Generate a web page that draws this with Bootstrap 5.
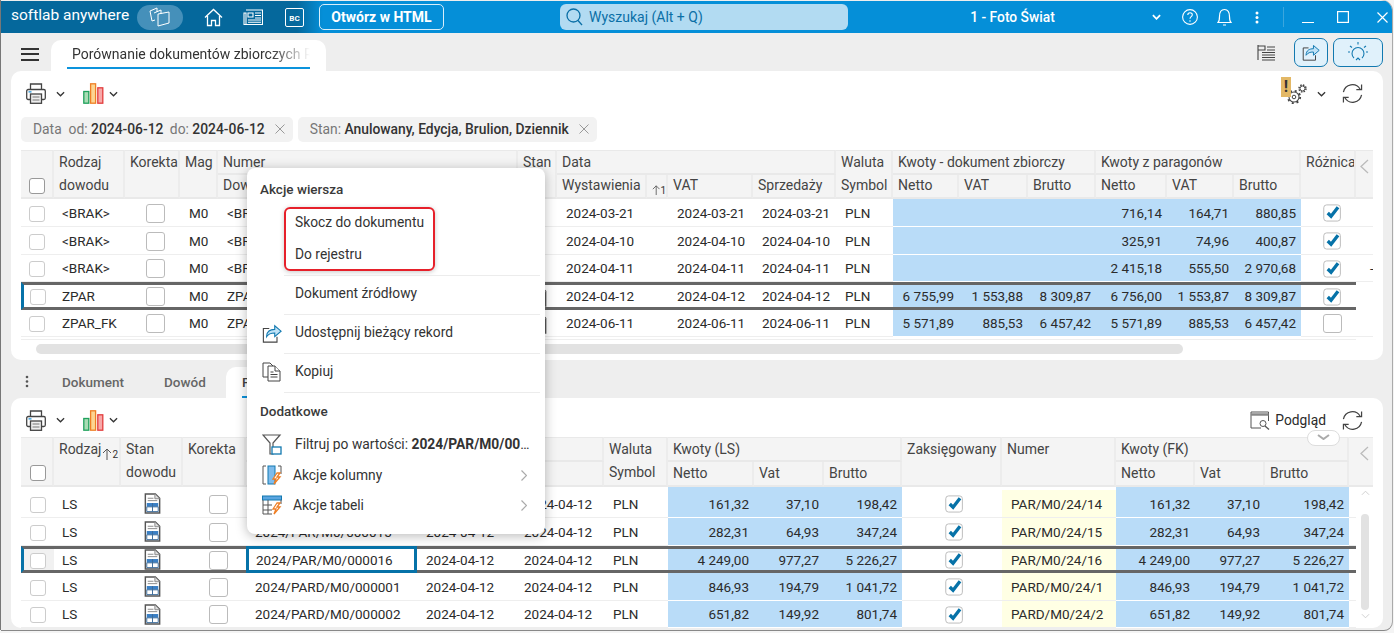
<!DOCTYPE html>
<html lang="pl">
<head>
<meta charset="utf-8">
<title>softlab anywhere</title>
<link href="https://cdn.jsdelivr.net/npm/bootstrap@5.3.0/dist/css/bootstrap.min.css" rel="stylesheet">
<style>
html,body{height:633px;overflow:hidden;background:#f4f4f4}
body{font-family:Roboto,"Liberation Sans",sans-serif;font-size:13.5px;color:#2b2b2b}
.app-win{position:relative;margin:0 2px 0 1px;height:630px;background:#eee;border-top-right-radius:11px;border-bottom-right-radius:8px;box-shadow:-1px 0 0 #777,0 1px 0 #888,1px 0 0 #aaa;overflow:hidden}
.tbar{height:32px;padding-left:10px;background:linear-gradient(90deg,#05689c 0,#05689c 296px,#058fd8 322px);color:#fff;margin-top:1px;flex:none}
.brand-txt{font-size:15.5px;width:126px;line-height:1;margin-top:-2px}
.pill-ico{width:46px;height:25px;border-radius:13px;background:#4590ba}
.tb-ico{color:#fff;line-height:0}
.bc-box{width:19px;height:19px;border:1.5px solid #fff;border-radius:2px;font-size:8px;font-weight:700;line-height:1;padding-top:6px;text-align:center}
.html-btn{--bs-btn-color:#fff;--bs-btn-border-color:#d8eefa;--bs-btn-hover-color:#fff;width:125px;height:26px;padding:0;border-radius:5px;font-size:14px;font-weight:700;line-height:24px}
.search-box{width:288px;height:26px;background:#b2dbf2;border-radius:6px;color:#0a6fa6;font-size:14px;padding-left:6px;gap:6px}
.firm-nm{width:297px;text-align:center;font-size:13.8px;font-weight:500}
.tabs-a{height:38px;flex:none}
.hamb{width:18px;height:13px;border-top:2px solid #333;border-bottom:2px solid #333;position:relative;margin:0 12px 0 20px}
.hamb::after{content:"";position:absolute;left:0;right:0;top:3.5px;height:2px;background:#333}
.tab-on{width:275px;height:31px;background:#fff;border-radius:10px 10px 0 0;padding:0 16px}
.tab-lbl{font-size:14px;height:29px;line-height:29px;border-bottom:2px solid #0c93dc;color:#333;white-space:nowrap;overflow:hidden}
.tab-fade{display:block;padding-left:5px;-webkit-mask-image:linear-gradient(90deg,#000 84%,transparent 100%);mask-image:linear-gradient(90deg,#000 84%,transparent 100%)}
.act-btn{height:29px;border:1px solid #1279b0;border-radius:7px;background:#e0f1fb;padding:0;line-height:0}
.panel-box{background:#fff;border-radius:10px;margin:0 9px 0 10px;padding:5px 10px 0;overflow:hidden;flex:none}
.panel-a{height:289px}
.panel-b{height:230px}
.tool-row{height:35px}
.panel-b .tool-row{height:34px}
.filter-chip{height:25px;background:#f2f2f2;border-radius:5px;padding:0 8px 0 12px;color:#777;white-space:nowrap;line-height:25px;margin-right:5px;font-size:13.85px}
.filter-chip b{font-weight:500;color:#333}
.chip-gap{margin-left:3px}
.chip-x{margin-left:10px;line-height:1;display:inline-flex}
.grid-tbl{--bs-table-bg:transparent;table-layout:fixed;width:1352px;margin:0;border-collapse:separate;border-spacing:0;color:#2b2b2b}
.grid-tbl th,.grid-tbl td{padding:0;white-space:nowrap;overflow:hidden;vertical-align:middle;line-height:20px;font-size:13.5px}
.grid-tbl th{font-size:14px;font-weight:400;color:#444;background:#f4f4f4;border-bottom:2px solid #e9e9e9;border-right:2px solid #ececec;padding-left:5px;height:25px;vertical-align:top;line-height:22px}
.grid-tbl thead tr:first-child th{border-top:1px solid #e9e9e9}
.grid-tbl thead tr+tr th{height:24px;line-height:21px}
.panel-b .grid-tbl thead tr+tr th{height:25px;line-height:22px}
.grid-tbl th.two-ln{line-height:23px}
.grid-tbl th.nobr{border-right:0}
.grid-tbl td{border-bottom:1px solid #eee;background:#fff}
.grid-tbl td.pl-m{padding-left:9px}
.grid-tbl td.pl-b{padding-left:21px}
.grid-tbl td.pl-k{padding-left:26px}
.grid-tbl td.pl-c{padding-left:8px}
.grid-tbl td.pl-r{padding-left:22px;line-height:0}
.grid-tbl td.pl-z{padding-left:43px;line-height:0}
.grid-tbl td.pl-d{padding-left:14px}
.grid-tbl td.amt{background:#b9dcf8;border-bottom:1px solid #fff;text-align:right;padding-right:5px}
.grid-tbl td.yel{background:#ffffe4;padding-left:9px}
.grid-tbl td.ctr{text-align:center;line-height:0}
.grid-tbl td.nob{border-bottom:0}
.r28 td{height:28px}
.r27 td{height:27px}
.sliv td{height:3px;border-bottom:0;line-height:0;font-size:0}
.sliv td.amt{background:#b9dcf8;border-bottom:0}
.grid-tbl .pick td{border-top:3px solid #666;border-bottom:3px solid #666}
.grid-tbl .pick td.edge{border-left:3px solid #0672a8;background:#f1f1f1}
.grid-tbl .pick td.edge-t{border-left:3px solid #0672a8}
.grid-tbl .pick td.cur{border:3px solid #0672a8;padding-left:7px}
.grid-tbl .pick td.last-c{border:0;background:#fff}
.form-check-input.box-s,.form-check-input.box-l{margin:0;border:1px solid #ccc;border-radius:3px;vertical-align:middle;float:none}
.form-check-input.box-s{width:16px;height:16px}
.form-check-input.box-l{width:19px;height:19px;border-color:#bbb}
.form-check-input.box-h{border-color:#999}
.sort-mk{font-size:10px;color:#333;line-height:1;display:flex;align-items:flex-end;padding-top:6px;height:21px}
.grid-tbl th.sort-cell{padding-left:5px}
.hs-wrap{margin-top:2px;padding-top:4px;border-top:1px solid #eee;width:1335px;height:15px}
.hs-thumb{width:1147px;height:10px;background:#e2e2e2;border-radius:5px;margin-left:15px}
.vs-col{height:137px;padding:2px 0 0 5px;background:#fff}
.vs-thumb{width:8px;height:96px;border-radius:4px;background:#e2e2e2;margin:18px 0 0}
.pull-pill{position:absolute;left:1306px;top:430px;width:33px;height:16px;background:#fff;border:1px solid #ddd;border-radius:9px;text-align:center;line-height:0;padding-top:3px}
.tabs-b{height:38px;padding-top:7px;color:#666;font-weight:500;flex:none}
.tab-plain{height:31px;line-height:30px}
.tab-on-b{width:190px;height:31px;background:#fff;border-radius:10px 10px 0 0;padding-left:16px;position:relative;line-height:30px;color:#444}
.tab-on-b::after{content:"";position:absolute;left:16px;right:16px;bottom:0;height:2px;background:#0c93dc}
.warn-mk{position:absolute;left:-6px;top:-7px;width:10px;height:20px;background:#e3b866;color:#333;font-weight:700;font-size:16px;line-height:19px;text-align:center}
.ctx-menu{position:absolute;left:246px;top:168px;width:298px;height:366px;display:block;padding:0;margin:0;background:#fff;border:0;border-radius:8px;box-shadow:0 2px 12px rgba(0,0,0,.28);font-size:13.8px;--bs-dropdown-link-color:#333;z-index:5}
.ctx-head{padding:11px 0 0 13px;line-height:20px;height:39px;font-weight:500;color:#3a3a3a;font-size:13.5px}
.ctx-head-b{padding-top:8px;height:35px}
.ctx-red{margin:0 0 4px 37px;width:151px;height:64px;border:2px solid #e6202a;border-radius:6px;box-shadow:0 1px 5px rgba(0,0,0,.22)}
.ctx-menu .ctx-red .dropdown-item{padding:0 0 0 9px}
.ctx-menu .ctx-red .ctx-up{height:27px;line-height:27px}
.ctx-menu .ctx-red .ctx-dn{height:29px;line-height:29px;margin-top:4px}
.ctx-line{margin:0 5px 0 37px;height:1px;background:#ececec;border:0;opacity:1}
.ctx-menu .dropdown-item{color:#333;background:none;font-size:13.8px}
.ctx-it{height:38px;padding:0 0 3px 48px!important;display:flex;align-items:center;position:relative}
.ctx-ic{width:20px;margin:0 13px 0 15px;line-height:0;flex:none}
.ctx-ico{height:38px;padding:0 0 3px 0!important;display:flex;align-items:center}
.ctx-sm{height:30px;padding:0!important;display:flex;align-items:center}
.ctx-sm .ctx-ic{margin-right:11px}
.ctx-menu .ctx-flt{height:32px}
.ctx-flt .ctx-ic{margin-right:13px}
.ctx-trunc{width:240px;white-space:nowrap;overflow:hidden;text-overflow:ellipsis;display:block}
.ctx-trunc b{font-weight:700}
.ctx-arr{position:absolute;left:274px;line-height:0}
</style>
</head>
<body>
<svg width="0" height="0" class="position-absolute">
<defs>
<symbol id="i-print" viewBox="0 0 20 21"><path d="M4.5 6.5V1h11v5.500" fill="#fff" stroke="#444" stroke-width="1.300"/><rect x=".7" y="6.500" width="18.600" height="10" rx="1.500" fill="#fff" stroke="#444" stroke-width="1.300"/><rect x="4.500" y="11" width="11" height="9.300" fill="#eee" stroke="#444" stroke-width="1.300"/><path d="M2.500 8.800h3" stroke="#1a8fd6" stroke-width="1.300"/><path d="M6.500 14h7M6.500 17h7" stroke="#777"/></symbol>
<symbol id="i-chart" viewBox="0 0 21 21"><rect x=".8" y="8.500" width="5" height="11.700" fill="#a9dcb4" stroke="#1fa15c" stroke-width="1.300"/><rect x="7.600" y=".8" width="5" height="19.400" fill="#fcd592" stroke="#ef7f25" stroke-width="1.300"/><rect x="14.800" y="4.800" width="5" height="15.400" fill="#f7a8a8" stroke="#e23d3d" stroke-width="1.300"/></symbol>
<symbol id="i-chev" viewBox="0 0 10 6"><path d="M1 1l4 4 4-4" fill="none" stroke="#333" stroke-width="1.400"/></symbol>
<symbol id="i-sync" viewBox="0 0 22 22"><path d="M1.500 9.500A9.500 9.500 0 0 1 19 6.500M20.500 1.500V7h-5.500M20.500 12.500A9.500 9.500 0 0 1 3 15.500M1.500 20.500V15H7" fill="none" stroke="#444" stroke-width="1.300"/></symbol>
<symbol id="i-doc" viewBox="0 0 17 22"><path d="M1 1h10.500L16 5.500V21H1z" fill="#fff" stroke="#555" stroke-width="1.500"/><path d="M11 1v5h5" fill="#ddd" stroke="#888"/><path d="M3.500 5.500h6M3.500 8h10" stroke="#888"/><rect x="2.500" y="10.500" width="12" height="4" fill="#3a7fc4"/><path d="M2.500 14.500h12v5h-12zM8.500 10.500v9" fill="#fff" stroke="#3a6a9a"/></symbol>
<symbol id="i-tick" viewBox="0 0 20 20"><rect x=".8" y="2" width="17.500" height="17" rx="3" fill="#fff" stroke="#bbb"/><path d="M5 10.500l3.500 3.500L15.800 4.500" fill="none" stroke="#0672a8" stroke-width="3.500"/></symbol>
<symbol id="i-share" viewBox="0 0 22 22"><path d="M8 6H1.500v15h15v-6" fill="none" stroke="#444" stroke-width="1.200"/><path d="M5 15c0-6 4-8 9-8V3l7 6-7 6v-4c-4 0-7 1-9 4z" fill="#bfe2f6" stroke="#1279b0" stroke-width="1.200"/></symbol>
</defs>
</svg>
<div class="app-win d-flex flex-column">
  <header class="tbar d-flex align-items-center">
    <div class="brand-txt">softlab anywhere</div>
    <div class="pill-ico d-flex align-items-center justify-content-center ms-0">
      <svg width="22" height="20" viewBox="0 0 22 20" fill="none" stroke="#fff" stroke-width="1"><path d="M1 4l7-3v4M1 4l2 10 3-1M5 6l7-3v4"/><path d="M9 7l11-2v11L9 19z"/></svg>
    </div>
    <div class="tb-ico" style="margin-left:21px"><svg width="19" height="19" viewBox="0 0 19 19" fill="none" stroke="#fff" stroke-width="1.300"><path d="M1 9.500L9.500 1.500 18 9.500M3.500 8v9.500h4v-5h4v5h4V8"/></svg></div>
    <div class="tb-ico" style="margin-left:20px"><svg width="20" height="16" viewBox="0 0 20 16" fill="none" stroke="#fff" stroke-width="1.100"><path d="M3 1h16.500v14.500H1V4h2v11.500M5 4h5v4H5zM12 4h6M12 6.500h6M12 9h6M5 11h13M5 13.300h13"/></svg></div>
    <div class="tb-ico bc-box" style="margin-left:22px">BC</div>
    <button type="button" class="btn html-btn" style="margin-left:15px">Otwórz w HTML</button>
    <div class="search-box d-flex align-items-center" style="margin-left:116px">
      <svg width="17" height="18" viewBox="0 0 17 18" fill="none" stroke="#0a6fa6" stroke-width="1.300"><circle cx="7.500" cy="7.500" r="6.500"/><path d="M12 12.500l4 4.500"/></svg>
      <span>Wyszukaj (Alt + Q)</span>
    </div>
    <div class="firm-nm" style="margin-left:16px">1 - Foto Świat</div>
    <svg width="9" height="6" viewBox="0 0 10 6" style="margin-left:-9px"><path d="M1 1l4 4 4-4" fill="none" stroke="#fff" stroke-width="2"/></svg>
    <div class="tb-ico" style="margin-left:21px"><svg width="16" height="16" viewBox="0 0 16 16" fill="none" stroke="#fff" stroke-width="1.100"><circle cx="8" cy="8" r="7.400"/><path d="M5.800 6c0-3 4.500-3 4.500-.2 0 1.900-2.300 1.900-2.300 4M8 11.300v1.400"/></svg></div>
    <div class="tb-ico" style="margin-left:19px"><svg width="15" height="18" viewBox="0 0 15 18" fill="none" stroke="#fff" stroke-width="1.200"><path d="M1 14.500h13c-1.500-1.500-1.500-3-1.500-6C12.500 4 11 1.500 7.500 1.500S2.500 4 2.500 8.500c0 3 0 4.500-1.500 6zM6 17h3"/></svg></div>
    <div class="tb-ico" style="margin-left:23px"><svg width="4" height="13" viewBox="0 0 4 13" fill="#fff"><circle cx="2" cy="2" r="1.500"/><circle cx="2" cy="6.500" r="1.500"/><circle cx="2" cy="11" r="1.500"/></svg></div>
    <div style="width:1px;height:20px;background:#3ba6dd;margin-left:24px"></div>
    <div class="tb-ico" style="margin-left:18px"><svg width="12" height="12" viewBox="0 0 12 12" fill="none" stroke="#fff"><path d="M0 11.500h12"/></svg></div>
    <div class="tb-ico" style="margin-left:23px"><svg width="12" height="12" viewBox="0 0 12 12" fill="none" stroke="#fff" stroke-width="1.200"><rect x=".6" y=".6" width="10.800" height="10.800"/></svg></div>
    <div class="tb-ico" style="margin-left:28px"><svg width="11" height="11" viewBox="0 0 11 11" fill="none" stroke="#fff" stroke-width="1.200"><path d="M.5.500l10 10M10.500.500l-10 10"/></svg></div>
  </header>

  <div class="tabs-a d-flex align-items-end">
    <div class="hamb align-self-center mt-1"></div>
    <div class="tab-on">
      <div class="tab-lbl"><span class="tab-fade">Porównanie dokumentów zbiorczych R</span></div>
    </div>
    <div class="ms-auto d-flex align-items-center align-self-center" style="gap:5px;margin-right:9px">
      <svg width="19" height="17" viewBox="0 0 19 17" fill="none" stroke="#444" style="margin-right:13px"><path d="M1 16V1M1 2h7v4H1M10 3h8M10 6h8M5 8.500h13M5 11h13M5 13.500h13M5 16h13" stroke-width="1.100"/></svg>
      <button type="button" class="act-btn d-inline-flex align-items-center justify-content-center" style="width:34px" aria-label="Udostępnij"><svg width="18" height="18" viewBox="0 0 22 22"><use href="#i-share"/></svg></button>
      <button type="button" class="act-btn d-inline-flex align-items-center justify-content-center" style="width:50px" aria-label="Wskazówki"><svg width="22" height="22" viewBox="0 0 22 22" fill="none" stroke="#1279b0" stroke-width="1.100"><path d="M7 17a6 6 0 1 1 8 0M9 19l2-2 2 2M11 1v2.500M3 5l2 1.500M19 5l-2 1.500M1 11h2M19 11h2"/></svg></button>
    </div>
  </div>

  <section class="panel-box panel-a">
    <div class="tool-row d-flex align-items-center">
      <svg width="20" height="21" style="margin-left:5px"><use href="#i-print"/></svg>
      <svg width="9" height="6" style="margin-left:10px"><use href="#i-chev"/></svg>
      <svg width="21" height="21" style="margin-left:18px"><use href="#i-chart"/></svg>
      <svg width="9" height="6" style="margin-left:5px"><use href="#i-chev"/></svg>
      <div class="ms-auto d-flex align-items-center" style="margin-right:10px">
        <div class="position-relative" style="width:20px;height:20px;line-height:0">
          <span class="warn-mk">!</span>
          <svg width="20" height="20" viewBox="0 0 20 20" fill="none" stroke="#444"><circle cx="7" cy="13" r="5" stroke-width="1.100"/><circle cx="7" cy="13" r="6.200" stroke-width="1.800" stroke-dasharray="2 2.870"/><circle cx="7" cy="13" r="1.800"/><circle cx="15.500" cy="4.500" r="2.500"/><circle cx="15.500" cy="4.500" r="3.500" stroke-width="1.500" stroke-dasharray="1.500 1.250"/></svg>
        </div>
        <svg width="9" height="6" style="margin-left:10px"><use href="#i-chev"/></svg>
        <svg width="21" height="21" style="margin-left:16px"><use href="#i-sync"/></svg>
      </div>
    </div>
    <div class="d-flex" style="margin-top:6px;margin-bottom:8px">
      <div class="filter-chip">Data&nbsp; od: <b>2024-06-12</b><span class="chip-gap"> do:</span> <b>2024-06-12</b><span class="chip-x"><svg width="10" height="10" viewBox="0 0 10 10" stroke="#999"><path d="M.5.500l9 9M9.500.500l-9 9"/></svg></span></div>
      <div class="filter-chip">Stan: <b>Anulowany, Edycja, Brulion, Dziennik</b><span class="chip-x"><svg width="10" height="10" viewBox="0 0 10 10" stroke="#999"><path d="M.5.500l9 9M9.500.500l-9 9"/></svg></span></div>
    </div>
    <table class="table grid-tbl">
      <colgroup><col style="width:33px"><col style="width:71px"><col style="width:55px"><col style="width:38px"><col style="width:300px"><col style="width:39px"><col style="width:90px"><col style="width:21px"><col style="width:85px"><col style="width:83px"><col style="width:57px"><col style="width:66px"><col style="width:69px"><col style="width:68px"><col style="width:71px"><col style="width:67px"><col style="width:67px"><col style="width:55px"><col style="width:17px"></colgroup>
      <thead>
        <tr>
          <th rowspan="2" class="align-bottom" style="padding:0 0 3px 8px;line-height:0"><input class="form-check-input box-s box-h" type="checkbox" aria-label="Zaznacz"></th>
          <th rowspan="2" class="two-ln">Rodzaj<br>dowodu</th>
          <th rowspan="2">Korekta</th>
          <th rowspan="2">Mag</th>
          <th>Numer</th>
          <th rowspan="2">Stan</th>
          <th colspan="4">Data</th>
          <th rowspan="2" class="two-ln">Waluta<br>Symbol</th>
          <th colspan="3">Kwoty - dokument zbiorczy</th>
          <th colspan="3">Kwoty z paragonów</th>
          <th rowspan="2">Różnica</th>
          <th rowspan="2" class="nobr" style="padding:8px 0 0 4px;border-left:0;line-height:0"><svg width="9" height="15" viewBox="0 0 9 15" fill="none" stroke="#bbb" stroke-width="1.300"><path d="M8 1L1 7.500 8 14"/></svg></th>
        </tr>
        <tr>
          <th>Dowód</th>
          <th>Wystawienia</th>
          <th class="sort-cell"><span class="sort-mk"><svg width="10" height="12" viewBox="0 0 10 12" fill="none" stroke="#555"><path d="M5 12V1M1 5l4-4 4 4"/></svg>1</span></th>
          <th>VAT</th>
          <th>Sprzedaży</th>
          <th>Netto</th><th>VAT</th><th>Brutto</th><th>Netto</th><th>VAT</th><th>Brutto</th>
        </tr>
      </thead>
      <tbody>
        <tr class="r28"><td class="pl-c"><input class="form-check-input box-s" type="checkbox" aria-label="Wiersz 1"></td><td class="pl-c">&lt;BRAK&gt;</td><td class="pl-b"><input class="form-check-input box-l" type="checkbox" aria-label="Korekta"></td><td class="pl-m">M0</td><td class="pl-m">&lt;BRAK&gt;</td><td></td><td class="pl-m">2024-03-21</td><td></td><td class="pl-m">2024-03-21</td><td class="pl-m">2024-03-21</td><td class="pl-m">PLN</td><td class="amt"></td><td class="amt"></td><td class="amt"></td><td class="amt">716,14</td><td class="amt">164,71</td><td class="amt">880,85</td><td class="pl-r"><svg width="19" height="19"><use href="#i-tick"/></svg></td><td></td></tr>
        <tr class="r28"><td class="pl-c"><input class="form-check-input box-s" type="checkbox" aria-label="Wiersz 2"></td><td class="pl-c">&lt;BRAK&gt;</td><td class="pl-b"><input class="form-check-input box-l" type="checkbox" aria-label="Korekta"></td><td class="pl-m">M0</td><td class="pl-m">&lt;BRAK&gt;</td><td></td><td class="pl-m">2024-04-10</td><td></td><td class="pl-m">2024-04-10</td><td class="pl-m">2024-04-10</td><td class="pl-m">PLN</td><td class="amt"></td><td class="amt"></td><td class="amt"></td><td class="amt">325,91</td><td class="amt">74,96</td><td class="amt">400,87</td><td class="pl-r"><svg width="19" height="19"><use href="#i-tick"/></svg></td><td></td></tr>
        <tr class="r27"><td class="pl-c"><input class="form-check-input box-s" type="checkbox" aria-label="Wiersz 3"></td><td class="pl-c">&lt;BRAK&gt;</td><td class="pl-b"><input class="form-check-input box-l" type="checkbox" aria-label="Korekta"></td><td class="pl-m">M0</td><td class="pl-m">&lt;BRAK&gt;</td><td></td><td class="pl-m">2024-04-11</td><td></td><td class="pl-m">2024-04-11</td><td class="pl-m">2024-04-11</td><td class="pl-m">PLN</td><td class="amt"></td><td class="amt"></td><td class="amt"></td><td class="amt">2&nbsp;415,18</td><td class="amt">555,50</td><td class="amt">2&nbsp;970,68</td><td class="pl-r"><svg width="19" height="19"><use href="#i-tick"/></svg></td><td class="pl-d">-</td></tr>
        <tr class="r28 pick"><td class="pl-c edge-t" style="padding-left:6px"><input class="form-check-input box-s" type="checkbox" aria-label="Wiersz 4"></td><td class="pl-c">ZPAR</td><td class="pl-b"><input class="form-check-input box-l" type="checkbox" aria-label="Korekta"></td><td class="pl-m">M0</td><td class="pl-m">ZPAR/M0</td><td class="text-end" style="padding-right:10px;line-height:0"><svg width="17" height="21"><use href="#i-doc"/></svg></td><td class="pl-m">2024-04-12</td><td></td><td class="pl-m">2024-04-12</td><td class="pl-m">2024-04-12</td><td class="pl-m">PLN</td><td class="amt">6&nbsp;755,99</td><td class="amt">1&nbsp;553,88</td><td class="amt">8&nbsp;309,87</td><td class="amt">6&nbsp;756,00</td><td class="amt">1&nbsp;553,87</td><td class="amt">8&nbsp;309,87</td><td class="pl-r"><svg width="19" height="19"><use href="#i-tick"/></svg></td><td class="last-c"></td></tr>
        <tr class="r27"><td class="pl-c"><input class="form-check-input box-s" type="checkbox" aria-label="Wiersz 5"></td><td class="pl-c">ZPAR_FK</td><td class="pl-b"><input class="form-check-input box-l" type="checkbox" aria-label="Korekta"></td><td class="pl-m">M0</td><td class="pl-m">ZPAR/M0</td><td class="text-end" style="padding-right:10px;line-height:0"><svg width="17" height="21"><use href="#i-doc"/></svg></td><td class="pl-m">2024-06-11</td><td></td><td class="pl-m">2024-06-11</td><td class="pl-m">2024-06-11</td><td class="pl-m">PLN</td><td class="amt">5&nbsp;571,89</td><td class="amt">885,53</td><td class="amt">6&nbsp;457,42</td><td class="amt">5&nbsp;571,89</td><td class="amt">885,53</td><td class="amt">6&nbsp;457,42</td><td class="pl-r"><input class="form-check-input box-l" type="checkbox" aria-label="Różnica"></td><td></td></tr>
      </tbody>
    </table>
    <div class="hs-wrap d-flex"><div class="hs-thumb"></div></div>
  </section>

  <div class="tabs-b d-flex align-items-start">
    <svg width="4" height="13" viewBox="0 0 4 13" fill="#555" style="margin:8px 33px 0 24px"><circle cx="2" cy="2" r="1.300"/><circle cx="2" cy="6.500" r="1.300"/><circle cx="2" cy="11" r="1.300"/></svg>
    <div class="tab-plain" style="width:102px">Dokument</div>
    <div class="tab-plain" style="width:62px">Dowód</div>
    <div class="tab-on-b">Paragony</div>
  </div>

  <section class="panel-box panel-b">
    <div class="tool-row d-flex align-items-center">
      <svg width="20" height="21" style="margin-left:5px"><use href="#i-print"/></svg>
      <svg width="9" height="6" style="margin-left:10px"><use href="#i-chev"/></svg>
      <svg width="21" height="21" style="margin-left:18px"><use href="#i-chart"/></svg>
      <svg width="9" height="6" style="margin-left:5px"><use href="#i-chev"/></svg>
      <div class="ms-auto d-flex align-items-center" style="margin-right:10px">
        <svg width="20" height="19" viewBox="0 0 20 19" fill="none" stroke="#555"><path d="M18.500 10V1H1v16h10"/><path d="M1 3.500h17.500" stroke-width="2.500" stroke="#888"/><circle cx="13" cy="12.500" r="3"/><path d="M15 15l4 3.500" stroke-width="1.300"/></svg>
        <span style="margin-left:5px;font-size:13.8px">Podgląd</span>
        <svg width="21" height="21" style="margin-left:16px"><use href="#i-sync"/></svg>
      </div>
    </div>
    <table class="table grid-tbl">
      <colgroup><col style="width:33px"><col style="width:67px"><col style="width:62px"><col style="width:63px"><col style="width:171px"><col style="width:98px"><col style="width:89px"><col style="width:64px"><col style="width:86px"><col style="width:70px"><col style="width:78px"><col style="width:100px"><col style="width:114px"><col style="width:79px"><col style="width:70px"><col style="width:84px"><col style="width:7px"><col style="width:17px"></colgroup>
      <thead>
        <tr>
          <th rowspan="2" class="align-bottom" style="padding:0 0 4px 9px;line-height:0"><input class="form-check-input box-s box-h" type="checkbox" aria-label="Zaznacz"></th>
          <th rowspan="2"><div class="d-flex justify-content-between">Rodzaj<span class="sort-mk" style="height:22px;padding-right:1px"><svg width="10" height="12" viewBox="0 0 10 12" fill="none" stroke="#555"><path d="M5 12V1M1 5l4-4 4 4"/></svg>2</span></div></th>
          <th rowspan="2" class="two-ln">Stan<br>dowodu</th>
          <th rowspan="2">Korekta</th>
          <th></th>
          <th colspan="2"></th>
          <th rowspan="2" class="two-ln">Waluta<br>Symbol</th>
          <th colspan="3">Kwoty (LS)</th>
          <th rowspan="2">Zaksięgowany</th>
          <th rowspan="2">Numer</th>
          <th colspan="3">Kwoty (FK)</th>
          <th rowspan="2" class="nobr" style="padding:0"></th>
          <th rowspan="2" class="nobr" style="padding:8px 0 0 4px;line-height:0"><svg width="9" height="15" viewBox="0 0 9 15" fill="none" stroke="#bbb" stroke-width="1.300"><path d="M8 1L1 7.500 8 14"/></svg></th>
        </tr>
        <tr>
          <th></th><th></th><th></th>
          <th>Netto</th><th>Vat</th><th>Brutto</th>
          <th>Netto</th><th>Vat</th><th>Brutto</th>
        </tr>
      </thead>
      <tbody>
        <tr class="sliv"><td></td><td></td><td></td><td></td><td></td><td></td><td></td><td></td><td class="amt"></td><td class="amt"></td><td class="amt"></td><td></td><td></td><td class="amt"></td><td class="amt"></td><td class="amt"></td><td></td>
          <td rowspan="6" class="nob" style="vertical-align:top"><div class="vs-col d-flex flex-column"><svg width="9" height="6" viewBox="0 0 10 6" fill="none" stroke="#ccc" style="margin-top:1px"><path d="M1 5l4-4 4 4"/></svg><div class="vs-thumb"></div><svg width="9" height="6" viewBox="0 0 10 6" fill="none" stroke="#ccc" style="margin-top:3px"><path d="M1 1l4 4 4-4"/></svg></div></td></tr>
        <tr class="r28"><td class="pl-c" style="padding-left:9px"><input class="form-check-input box-s" type="checkbox" aria-label="Wiersz 1"></td><td class="pl-c">LS</td><td class="ctr"><svg width="17" height="21"><use href="#i-doc"/></svg></td><td class="pl-k"><input class="form-check-input box-l" type="checkbox" aria-label="Korekta"></td><td class="pl-m"></td><td class="pl-m"></td><td class="pl-m">2024-04-12</td><td class="pl-m">PLN</td><td class="amt">161,32</td><td class="amt">37,10</td><td class="amt">198,42</td><td class="pl-z"><svg width="19" height="19"><use href="#i-tick"/></svg></td><td class="yel">PAR/M0/24/14</td><td class="amt">161,32</td><td class="amt">37,10</td><td class="amt">198,42</td><td></td></tr>
        <tr class="r28"><td class="pl-c" style="padding-left:9px"><input class="form-check-input box-s" type="checkbox" aria-label="Wiersz 2"></td><td class="pl-c">LS</td><td class="ctr"><svg width="17" height="21"><use href="#i-doc"/></svg></td><td class="pl-k"><input class="form-check-input box-l" type="checkbox" aria-label="Korekta"></td><td class="pl-m">2024/PAR/M0/000015</td><td class="pl-m">2024-04-12</td><td class="pl-m">2024-04-12</td><td class="pl-m">PLN</td><td class="amt">282,31</td><td class="amt">64,93</td><td class="amt">347,24</td><td class="pl-z"><svg width="19" height="19"><use href="#i-tick"/></svg></td><td class="yel">PAR/M0/24/15</td><td class="amt">282,31</td><td class="amt">64,93</td><td class="amt">347,24</td><td></td></tr>
        <tr class="r27 pick"><td class="edge" style="padding-left:6px"><input class="form-check-input box-s" type="checkbox" aria-label="Wiersz 3"></td><td class="pl-c">LS</td><td class="ctr"><svg width="17" height="21"><use href="#i-doc"/></svg></td><td class="pl-k"><input class="form-check-input box-l" type="checkbox" aria-label="Korekta"></td><td class="cur">2024/PAR/M0/000016</td><td class="pl-m">2024-04-12</td><td class="pl-m">2024-04-12</td><td class="pl-m">PLN</td><td class="amt">4&nbsp;249,00</td><td class="amt">977,27</td><td class="amt">5&nbsp;226,27</td><td class="pl-z"><svg width="19" height="19"><use href="#i-tick"/></svg></td><td class="yel">PAR/M0/24/16</td><td class="amt">4&nbsp;249,00</td><td class="amt">977,27</td><td class="amt">5&nbsp;226,27</td><td></td></tr>
        <tr class="r28"><td class="pl-c" style="padding-left:9px"><input class="form-check-input box-s" type="checkbox" aria-label="Wiersz 4"></td><td class="pl-c">LS</td><td class="ctr"><svg width="17" height="21"><use href="#i-doc"/></svg></td><td class="pl-k"><input class="form-check-input box-l" type="checkbox" aria-label="Korekta"></td><td class="pl-m">2024/PARD/M0/000001</td><td class="pl-m">2024-04-12</td><td class="pl-m">2024-04-12</td><td class="pl-m">PLN</td><td class="amt">846,93</td><td class="amt">194,79</td><td class="amt">1&nbsp;041,72</td><td class="pl-z"><svg width="19" height="19"><use href="#i-tick"/></svg></td><td class="yel">PARD/M0/24/1</td><td class="amt">846,93</td><td class="amt">194,79</td><td class="amt">1&nbsp;041,72</td><td></td></tr>
        <tr class="r27"><td class="pl-c" style="padding-left:9px"><input class="form-check-input box-s" type="checkbox" aria-label="Wiersz 5"></td><td class="pl-c">LS</td><td class="ctr"><svg width="17" height="21"><use href="#i-doc"/></svg></td><td class="pl-k"><input class="form-check-input box-l" type="checkbox" aria-label="Korekta"></td><td class="pl-m">2024/PARD/M0/000002</td><td class="pl-m">2024-04-12</td><td class="pl-m">2024-04-12</td><td class="pl-m">PLN</td><td class="amt">651,82</td><td class="amt">149,92</td><td class="amt">801,74</td><td class="pl-z"><svg width="19" height="19"><use href="#i-tick"/></svg></td><td class="yel">PARD/M0/24/2</td><td class="amt">651,82</td><td class="amt">149,92</td><td class="amt">801,74</td><td></td></tr>
      </tbody>
    </table>
  </section>

  <div class="pull-pill"><svg width="13" height="6" viewBox="0 0 13 6" fill="none" stroke="#aaa" stroke-width="2"><path d="M1 1l5.500 4L12 1"/></svg></div>

  <div class="dropdown-menu show ctx-menu">
    <div class="ctx-head">Akcje wiersza</div>
    <div class="ctx-red">
      <a class="dropdown-item ctx-up" href="#">Skocz do dokumentu</a>
      <a class="dropdown-item ctx-dn" href="#">Do rejestru</a>
    </div>
    <hr class="ctx-line">
    <a class="dropdown-item ctx-it" href="#">Dokument źródłowy</a>
    <hr class="ctx-line">
    <a class="dropdown-item ctx-ico" href="#"><span class="ctx-ic"><svg width="20" height="20"><use href="#i-share"/></svg></span>Udostępnij bieżący rekord</a>
    <hr class="ctx-line">
    <a class="dropdown-item ctx-ico" href="#"><span class="ctx-ic"><svg width="20" height="20" viewBox="0 0 20 20" fill="#fff" stroke="#444"><path d="M1 1h7l3 3v11H1z"/><path d="M6 4h7l5 5v10H6z"/><path d="M13 4v5h5M8.500 10h3M8.500 12.500h7M8.500 15h7"/></svg></span>Kopiuj</a>
    <hr class="ctx-line">
    <div class="ctx-head ctx-head-b">Dodatkowe</div>
    <a class="dropdown-item ctx-sm ctx-flt" href="#"><span class="ctx-ic"><svg width="20" height="21" viewBox="0 0 20 21" fill="none"><path d="M1 1h17l-7 8v11H8V9z" stroke="#555" stroke-width="1.200"/><rect x="10" y="13" width="9" height="7" fill="#fff" stroke="#1279b0" stroke-width="1.300"/></svg></span><span class="ctx-trunc">Filtruj po wartości: <b>2024/PAR/M0/000016</b></span></a>
    <a class="dropdown-item ctx-sm" href="#"><span class="ctx-ic"><svg width="20" height="20" viewBox="0 0 20 20" fill="none"><path d="M4 1H1v18h3M16 1h3v8" stroke="#555"/><rect x="6" y="1" width="7" height="18" fill="#7fbcec" stroke="#1279b0"/><path d="M15 8l-4 6h3l-2 5 6-7h-3l3-4z" fill="#fff" stroke="#ef7f25" stroke-width="1.300"/></svg></span>Akcje kolumny<span class="ctx-arr"><svg width="6" height="11" viewBox="0 0 6 11" fill="none" stroke="#aaa" stroke-width="1.200"><path d="M.5.500l5 5-5 5"/></svg></span></a>
    <a class="dropdown-item ctx-sm" href="#"><span class="ctx-ic"><svg width="20" height="20" viewBox="0 0 20 20" fill="none"><rect x=".5" y="1" width="19" height="4" fill="#5aa5e0" stroke="#1279b0"/><path d="M1 5v14h9M1 10h9M1 15h9M6 5v14M19 5v4" stroke="#555"/><path d="M15 8l-4 6h3l-2 5 6-7h-3l3-4z" fill="#fff" stroke="#ef7f25" stroke-width="1.300"/></svg></span>Akcje tabeli<span class="ctx-arr"><svg width="6" height="11" viewBox="0 0 6 11" fill="none" stroke="#aaa" stroke-width="1.200"><path d="M.5.500l5 5-5 5"/></svg></span></a>
  </div>
</div>
<script src="https://cdn.jsdelivr.net/npm/bootstrap@5.3.0/dist/js/bootstrap.bundle.min.js"></script>
</body>
</html>
